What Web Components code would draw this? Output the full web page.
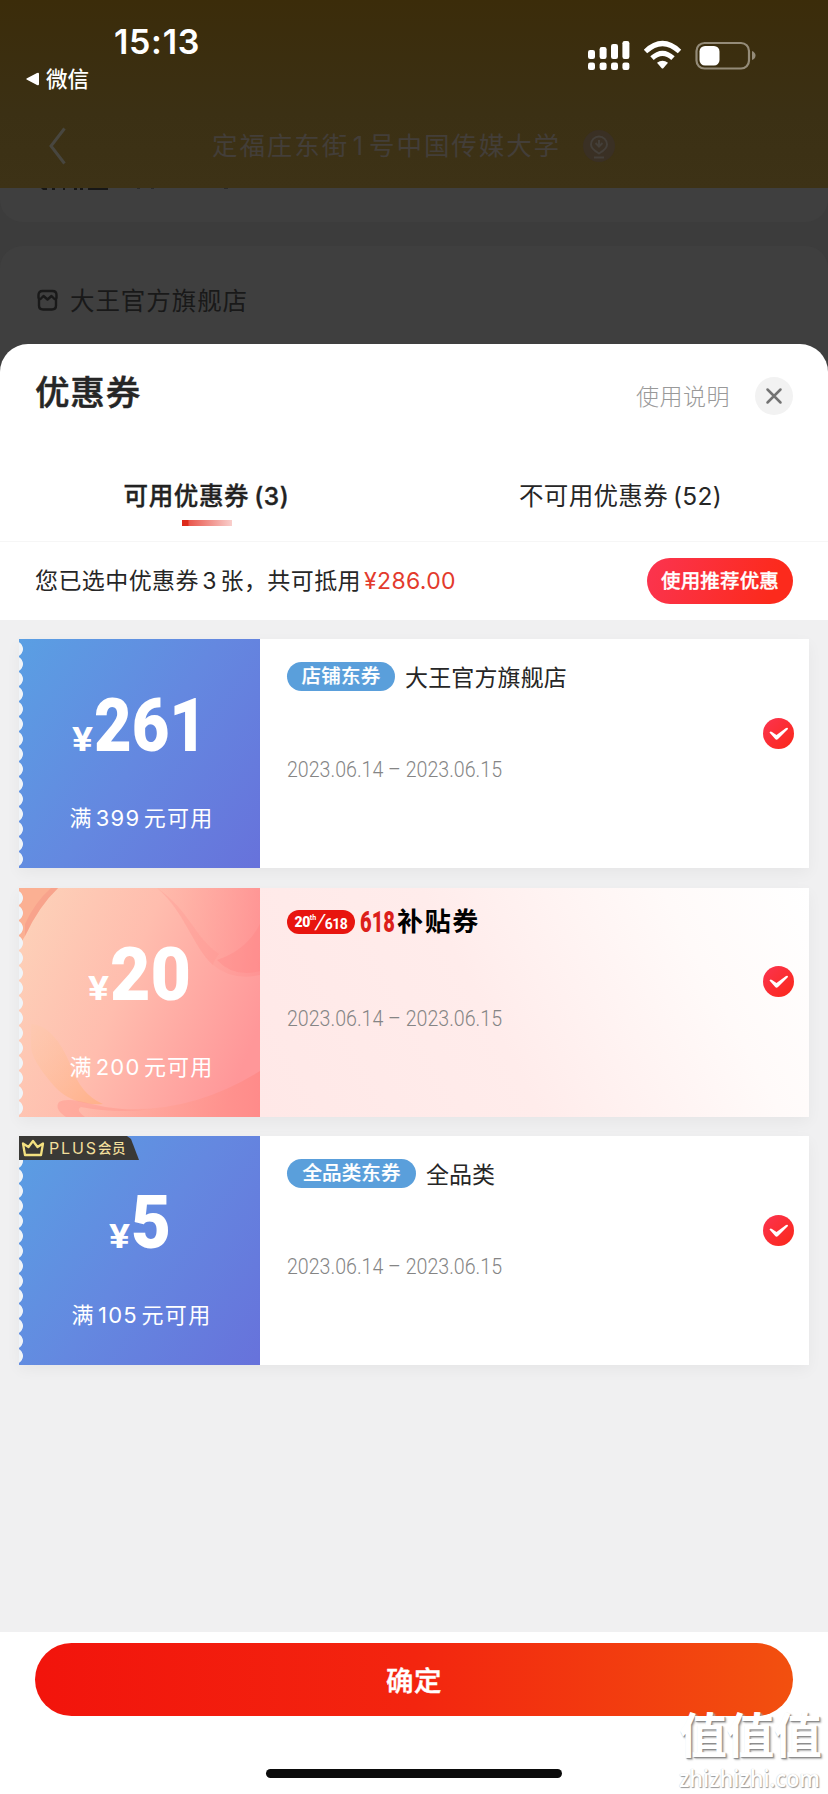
<!DOCTYPE html>
<html lang="zh-CN">
<head>
<meta charset="utf-8">
<title>优惠券</title>
<style>
html,body{margin:0;padding:0}
body{width:828px;height:1794px;overflow:hidden;font-family:Inter,"Noto Sans CJK SC",sans-serif;color:#262626}
</style>
</head>
<body>
<coupon-page></coupon-page>
<script>
const define = (name, html, setup) => customElements.define(name, class extends HTMLElement {
  connectedCallback() {
    if (this.shadowRoot) return;
    const t = document.createElement('template');
    t.innerHTML = typeof html === 'function' ? html(this) : html;
    this.attachShadow({mode: 'open'}).appendChild(t.content.cloneNode(true));
    if (setup) setup(this);
  }
});

/* A single line of text that fills a given width, by tracking or by condensing. */
define('fit-text', `<style>
:host{display:block;flex:none;white-space:nowrap}
span{display:inline-block;white-space:pre;transform-origin:0 50%}
::slotted(em){font-style:normal;margin:0 .16em 0 .14em}
</style><span><slot></slot></span>`, el => {
  const span = el.shadowRoot.querySelector('span');
  const w = +el.getAttribute('w');
  el.style.width = w + 'px';
  const natural = span.getBoundingClientRect().width;
  if (el.hasAttribute('squeeze')) span.style.transform = `scaleX(${w / natural})`;
  else span.style.letterSpacing = (w - natural) / el.textContent.length + 'px';
});

define('status-bar', `<style>
:host{display:flex;justify-content:space-between;height:110px;color:#fff}
.l{padding-left:25px}
.time{margin:22px 0 0 89px;font:600 34px/40px Inter,sans-serif}
.back{display:flex;align-items:center;gap:7px;margin-top:2px;font-size:21.5px;font-weight:500;line-height:30px}
.r{display:flex;align-items:flex-start;padding:40px 70px 0 0}
svg{display:block}
</style>
<div class="l"><fit-text class="time" w="86">15:13</fit-text>
<div class="back"><svg width="14" height="14" viewBox="0 0 14 14"><path d="M2 6.2 12 1Q14 0 14 2V12Q14 14 12 13L2 7.8Q.2 7 2 6.2Z" fill="#fff"/></svg><fit-text w="43">微信</fit-text></div></div>
<div class="r"><svg width="171" height="32" viewBox="0 0 171 32" fill="#fff">
<g><rect x="1" y="10" width="7" height="9" rx="2.2"/><rect x="12.6" y="7" width="7" height="12" rx="2.2"/><rect x="24" y="4" width="7" height="15" rx="2.2"/><rect x="35.4" y="1" width="7" height="18" rx="2.2"/>
<rect x="1" y="22.500" width="7" height="7.500" rx="2.200"/><rect x="12.600" y="22.500" width="7" height="7.500" rx="2.200"/><rect x="24" y="22.500" width="7" height="7.500" rx="2.200"/><rect x="35.400" y="22.500" width="7" height="7.500" rx="2.200"/></g>
<g fill="none" stroke="#fff" stroke-width="5"><path d="M58.500 11.500Q75.500-4.500 92.500 11.500"/><path d="M65 18.200Q75.500 8.500 86 18.200"/></g>
<path d="M70 22.800Q75.500 18.700 81 22.800L76.500 28Q75.500 29 74.500 28Z"/>
<rect x="109.500" y="3" width="52.500" height="25.500" rx="8" fill="none" stroke="#948b78" stroke-width="2.200"/>
<rect x="112.500" y="6" width="20" height="19.500" rx="5.500"/><path d="M165 11q3.500 1.500 3.500 4.500t-3.500 4.500z" fill="#948b78"/>
</svg></div>`);

define('address-bar', `<style>
:host{display:flex;align-items:center;height:72px;padding-left:48px;color:#433e39;font-size:25.5px}
fit-text{margin:0 22px 0 144px;line-height:40px}svg{flex:none}
</style>
<svg width="20" height="38" viewBox="0 0 20 38"><path d="M16.500 1.500 3 19 16.500 36.500" fill="none" stroke="#48463f" stroke-width="3"/></svg>
<fit-text w="349">定福庄东街<em>1</em>号中国传媒大学</fit-text>
<svg width="34" height="34" viewBox="0 0 34 34"><circle cx="16" cy="17" r="16" fill="#3a3024"/><g fill="none" stroke="#443f39" stroke-width="2"><path d="M16 24.500C10 21 8 18.500 8 15.500a8 8 0 0 1 16 0C24 18.500 22 21 16 24.500Z"/><path d="M12.500 14 16 17.500 19.500 14M16 11v6M11 28.500h10"/></g></svg>`);

define('order-backdrop', `<style>
:host{display:block;height:372px;background:#3c3c3c}
header{height:188px;background:linear-gradient(#3b2c0a,#3b3014 60%,#3d3216)}
.a,.b{background:#3f3f3f}
.a{height:34px;border-radius:0 0 22px 22px}.a svg{display:block}
.b{height:126px;margin-top:24px;border-radius:22px 22px 0 0;padding-left:36px}
.shop{display:flex;align-items:center;gap:11px;height:107px;font-size:24.5px;color:#191919}
</style>
<header><status-bar></status-bar><address-bar></address-bar></header>
<div class="a"><svg width="260" height="4"><path d="M41 0h6v2h-4zM52 0h3v2h-3zM63 0h2v2h-2zM74 0h3v2h-3zM80 0h3v2h-3zM88 0h20v2h-20z" fill="#171717"/><path d="M137 0h3v1h-3zM151 0h3v1h-3zM224 0h4v1h-4z" fill="#2b2b2b"/></svg></div>
<div class="b"><div class="shop"><svg width="23" height="24" viewBox="0 0 23 24" fill="none" stroke="#191919" stroke-width="2.400" stroke-linejoin="round"><path d="M2.500 9.500V7Q2.500 3 6.500 3H16.500Q20.500 3 20.500 7V9.500Q20.500 11 18.500 11L15.500 8 11.500 11.500 7.500 8 4.500 11Q2.500 11 2.500 9.500ZM3 11V17.500Q3 21.500 7 21.500H16Q20 21.500 20 17.500V11"/></svg><fit-text w="178">大王官方旗舰店</fit-text></div></div>`);

define('sheet-header', `<style>
:host{display:flex;align-items:center;height:104px;padding:0 35px;justify-content:space-between}
.t{font-size:34.500px;font-weight:500;line-height:50px;margin-top:-7px;-webkit-text-stroke:.5px}
.r{display:flex;align-items:center;gap:25px;font-size:23px;color:#999;font-weight:300}
.r fit-text{margin-top:-3px}
</style><fit-text class="t" w="106">优惠券</fit-text>
<div class="r"><fit-text w="94">使用说明</fit-text><svg width="38" height="38" viewBox="0 0 38 38"><circle cx="19" cy="19" r="19" fill="#f2f2f2"/><path d="M12.500 12.500 25.500 25.500M25.500 12.500 12.500 25.500" stroke="#737373" stroke-width="2.500" stroke-linecap="round"/></svg></div>`);

define('coupon-tabs', `<style>
:host{display:grid;grid-template-columns:413px 415px;height:93px;border-bottom:1px solid #f6f6f6;font-size:24.500px;line-height:36px;justify-items:center}
div{padding-top:30px;display:flex;flex-direction:column;align-items:center}
.on{font-weight:500;color:#222;-webkit-text-stroke:.35px}
em{margin:0 0 0 .2em!important}
i{width:50px;height:6px;margin-top:6px;background:linear-gradient(90deg,#dd2a1b 0 6px,#e9574d 7px,#f9cfcc)}
</style><div class="on"><fit-text w="166">可用优惠券<em>(3)</em></fit-text><i></i></div><div><fit-text w="203">不可用优惠券<em>(52)</em></fit-text></div>`);

define('coupon-summary', `<style>
:host{display:flex;align-items:center;justify-content:space-between;height:78px;padding:0 35px;font-size:23px;line-height:36px}
p{display:flex;align-items:center;margin:0;gap:3px}
b{font-weight:400;color:#e33a2c}
.btn{display:flex;align-items:center;justify-content:center;width:146px;height:46px;border-radius:23px;color:#fff;font-size:19.500px;font-weight:500;-webkit-text-stroke:.3px;background:linear-gradient(110deg,#fb3450,#fc2a1c 85%)}
</style><p><fit-text w="326">您已选中优惠券<em>3</em>张，共可抵用</fit-text><b><fit-text w="92">¥286.00</fit-text></b></p>
<div class="btn"><fit-text w="118">使用推荐优惠</fit-text></div>`);

define('check-mark', `<style>:host{display:block;width:31px;height:31px}</style>
<svg width="31" height="31" viewBox="0 0 31 31"><defs><linearGradient id="g" x2="1" y2="1"><stop stop-color="#fb3450"/><stop offset="1" stop-color="#fb2718"/></linearGradient></defs><circle cx="15.500" cy="15.500" r="15.500" fill="url(#g)"/><path d="M6.500 14.500Q7.500 13 9 14L13.500 17 23 10Q25 9 25 11L15 21Q13.500 22.500 12 20.800Z" fill="#fff"/></svg>`);

define('coupon-tag', `<style>:host{display:flex;align-items:center;justify-content:center;height:29px;border-radius:15px;background:#5a9fdb;color:#fff;font-size:19.500px;font-weight:500;line-height:29px;-webkit-text-stroke:.2px}</style><slot></slot>`);

define('promo-tag', `<style>
:host{display:flex;align-items:center;height:26px;font-weight:700}
.p{display:flex;align-items:center;justify-content:center;width:68px;height:24px;border-radius:12px;background:#e8150f;color:#fff;font:700 14px/24px Roboto,sans-serif;margin-right:5px}
.p sup{font-size:7px;line-height:8px;align-self:flex-start;margin-top:4px}.p u{font-size:21px;font-weight:400;text-decoration:none;transform:skewX(-12deg)}
.p small{font-size:14px;margin-top:4px;letter-spacing:-.5px}.p>b{letter-spacing:-.5px}
.n{font:900 30px/26px Roboto,sans-serif;color:#dc1f1b;margin-right:2px}
.c{font-size:26px;line-height:26px;font-weight:700;color:#000}
</style><span class="p"><b>20</b><sup>th</sup><u>/</u><small>618</small></span><fit-text class="n" squeeze w="35">618</fit-text><fit-text class="c" w="83">补贴券</fit-text>`);

define('plus-badge', `<style>
:host{display:flex;align-items:center;width:120px;height:24px;background:#3a3936;color:#f1df9c;clip-path:polygon(0 0,108px 0,112px 3px,120px 24px,0 24px);font-size:16px;line-height:24px}
svg{margin:0 4px 0 2px;flex:none}.c{font-weight:500;font-size:13.500px}
</style><svg width="24" height="18" viewBox="0 0 24 18"><path d="M2 4.500 7.500 8 12 2 16.500 8 22 4.500 20 16H4Z" fill="none" stroke="#f4e180" stroke-width="2.300" stroke-linejoin="round"/></svg><fit-text w="49">PLUS</fit-text><fit-text class="c" w="28">会员</fit-text>`);

const petals = `<svg class="art" viewBox="0 0 241 229" preserveAspectRatio="none"><defs>
<linearGradient id="b" x1="0" y1=".2" x2="1" y2=".6"><stop stop-color="#fdd0b8"/><stop offset=".45" stop-color="#ffbdae"/><stop offset="1" stop-color="#ff9799"/></linearGradient>
<linearGradient id="c" x2="1"><stop stop-color="#ffb494" stop-opacity="0"/><stop offset="1" stop-color="#ff8785" stop-opacity=".75"/></linearGradient>
<linearGradient id="e" x2="1"><stop stop-color="#ffb5a5" stop-opacity=".3"/><stop offset="1" stop-color="#ff8d8e" stop-opacity=".6"/></linearGradient>
<linearGradient id="d" x2="1" y2="1"><stop stop-color="#ffc9a5" stop-opacity=".2"/><stop offset="1" stop-color="#ffb089"/></linearGradient></defs>
<rect width="241" height="229" fill="url(#b)"/>
<path d="M0 0H39Q20 18 6 48L0 58Z" fill="#fbb093"/>
<path d="M39 0Q20 18 6 48V36Q16 14 32 0Z" fill="#f69b87" opacity=".6"/>
<path d="M138 0H241V87Q213 93 194 77C174 59 167 26 138 0Z" fill="url(#e)"/>
<path d="M138 0C170 22 176 50 200 66Q194 74 194 77C174 59 165 22 138 0Z" fill="#ff8f8a" opacity=".25"/>
<path d="M241 36Q228 62 198 72Q215 90 241 83Z" fill="#ff8081" opacity=".3"/>
<path d="M12 136Q35 137 52 178Q62 207 84 216Q54 218 36 199Q12 172 12 158Z" fill="url(#d)"/>
<path d="M241 183Q178 222 113 221Q73 220 48 213L40 214Q47 226 62 229H241Z" fill="url(#c)"/>
<path d="M40 214Q48 209 72 216Q106 224 134 221Q98 226 62 219Q56 222 66 229H47Q35 221 40 214Z" fill="#ff9990" opacity=".5"/>
</svg>`;

define('coupon-card', el => {
  const a = n => el.getAttribute(n), art = el.hasAttribute('promo');
  return `<style>
:host{display:grid;grid-template-columns:241px 1fr;height:229px;box-shadow:0 5px 14px rgba(0,0,0,.045)}
.left{position:relative;display:flex;flex-direction:column;align-items:center;color:#fff;background:${art ? '#ffbdb0' : 'linear-gradient(125deg,#5a9fe3,#6488e0 50%,#6772db)'}}
.art{position:absolute;inset:0;width:100%;height:100%}
.left::after{content:"";position:absolute;left:0;top:2px;width:5px;height:226px;background:radial-gradient(circle at -4px 8px,#f0f4f8 7.500px,transparent 8.300px) 0 0/5px 15px repeat-y}
.amt{position:relative;display:flex;align-items:baseline;height:88px;margin-top:42px;font:900 75px/88px Roboto,sans-serif}
.amt .y{font-size:34px;font-weight:700;margin-right:1px}
.cond{position:relative;left:2px;font-size:22px;line-height:34px;margin-top:32px}
.right{display:grid;grid-template-columns:1fr 31px;padding:0 15px 0 27px;background:${art ? 'linear-gradient(62deg,#ffe8e7 0,#ffeceb 42%,#fffaf9 78%,#fff)' : '#fff'}}
.ttl{display:flex;align-items:center;gap:10px;height:29px;margin-top:${art ? 20 : 23}px;font-size:23px;line-height:34px}
.date{margin-top:${art ? 67 : 64}px;font:300 22px/30px Roboto,sans-serif;color:#858585}
check-mark{margin-top:78.500px}
plus-badge{position:absolute;left:0;top:0;z-index:2}
</style>
<div class="left">${art ? petals : ''}${el.hasAttribute('plus') ? '<plus-badge></plus-badge>' : ''}
<div class="amt"><fit-text class="y" squeeze w="21">¥</fit-text><fit-text squeeze w="${a('aw')}">${a('amount')}</fit-text></div>
<fit-text class="cond" w="${a('cw')}">满<em>${a('min')}</em>元可用</fit-text></div>
<div class="right"><div><div class="ttl"><slot></slot></div><fit-text class="date" squeeze w="215">2023.06.14 – 2023.06.15</fit-text></div><check-mark></check-mark></div>`;
});

define('coupon-list', `<style>:host{display:flex;flex-direction:column;gap:19.500px;height:993px;padding:19px 19px 0;background:#f0f0f1}coupon-tag{flex:none}.n{margin-top:2px}</style>
<coupon-card amount="261" aw="113" min="399" cw="144"><coupon-tag style="width:108px"><fit-text w="79">店铺东券</fit-text></coupon-tag><fit-text class="n" w="162">大王官方旗舰店</fit-text></coupon-card>
<coupon-card promo amount="20" aw="81" min="200" cw="144"><promo-tag></promo-tag></coupon-card>
<coupon-card plus amount="5" aw="40" min="105" cw="140"><coupon-tag style="width:129px"><fit-text w="98">全品类东券</fit-text></coupon-tag><fit-text class="n" w="69">全品类</fit-text></coupon-card>`);

define('sheet-footer', `<style>
:host{display:block;position:relative;height:162px;background:#fff}
.ok{display:flex;align-items:center;justify-content:center;height:73px;border-radius:37px;color:#fff;font-size:27.500px;font-weight:500;-webkit-text-stroke:.4px;background:linear-gradient(90deg,#f2140c,#f3250f 50%,#f2500f)}
.ok fit-text{margin-top:-2px}
.pad{padding:11px 35px 0}
.home{width:296px;height:9px;border-radius:5px;background:#0b0b0b;margin:53px auto 0}
.wm{position:absolute;left:679px;top:76px;color:#fff;text-shadow:1px 1px 1px #888,2px 2px 2px #bbb}
.big{font-size:48px;font-weight:700;line-height:56px}
.url{font:600 23px/28px "Open Sans",sans-serif;margin-top:0;text-shadow:1px 1px 1px #999,0 0 1px #bbb}
</style><div class="pad"><div class="ok"><fit-text w="56">确定</fit-text></div></div><div class="home"></div>
<div class="wm"><fit-text class="big" w="142">值值值</fit-text><fit-text class="url" squeeze w="141">zhizhizhi.com</fit-text></div>`);

define('coupon-page', `<style>
:host{display:block;width:828px;height:1794px;overflow:hidden}
.sheet{position:relative;margin-top:-28px;background:#fff;border-radius:28px 28px 0 0}
</style><order-backdrop></order-backdrop>
<div class="sheet"><sheet-header></sheet-header><coupon-tabs></coupon-tabs><coupon-summary></coupon-summary><coupon-list></coupon-list><sheet-footer></sheet-footer></div>`);
</script>
</body>
</html>
